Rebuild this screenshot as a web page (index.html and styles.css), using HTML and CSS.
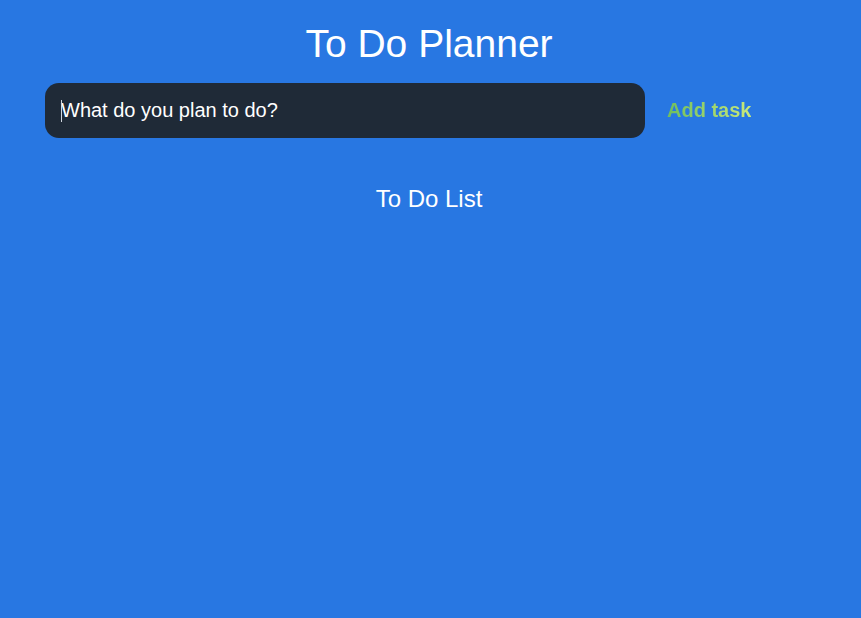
FILE: index.html
```html
<!DOCTYPE html>
<html lang="en">
<head>
<meta charset="utf-8">
<title>To Do Planner</title>
<link rel="stylesheet" href="styles.css">
</head>
<body>
<main class="app">
  <h1 class="title">To Do Planner</h1>
  <form class="task-form">
    <div class="task-input"><span class="caret"></span>What do you plan to do?</div>
    <button type="button" class="add-btn">Add task</button>
  </form>
  <h2 class="list-title">To Do List</h2>
  <ul class="task-list"></ul>
</main>
</body>
</html>
```
FILE: styles.css
```css
html, body {
  margin: 0;
  padding: 0;
}
body {
  background: #2877e2;
  width: 861px;
  height: 618px;
  font-family: "Liberation Sans", Arial, sans-serif;
  color: #ffffff;
}
.app {
  display: flex;
  flex-direction: column;
  align-items: center;
  padding-top: 20px;
}
.title {
  margin: 0;
  font-size: 39px;
  font-weight: 400;
  line-height: 48px;
  margin-left: -3px;
}
.task-form {
  display: flex;
  align-items: center;
  align-self: flex-start;
  margin-left: 45px;
  margin-top: 15px;
  gap: 23px;
}
.task-input {
  box-sizing: border-box;
  width: 600px;
  height: 55px;
  background: #1f2a37;
  border-radius: 14px;
  padding-left: 16px;
  display: flex;
  align-items: center;
  font-size: 20px;
  color: #ffffff;
  position: relative;
}
.caret {
  display: inline-block;
  width: 1px;
  height: 22px;
  background: #cfd6de;
  position: absolute;
  left: 16px;
  top: 17px;
}
.add-btn {
  border: none;
  padding: 0;
  font-family: "Liberation Sans", Arial, sans-serif;
  font-size: 20px;
  font-weight: 700;
  background: linear-gradient(90deg, #6fbe5c 0%, #c9ea7c 100%);
  -webkit-background-clip: text;
  background-clip: text;
  color: transparent;
  cursor: pointer;
  margin-left: -1px;
}
.list-title {
  margin: 47px 0 0 -3px;
  font-size: 24px;
  font-weight: 400;
  line-height: 28px;
}
.task-list {
  margin: 0;
  padding: 0;
  list-style: none;
}
```
